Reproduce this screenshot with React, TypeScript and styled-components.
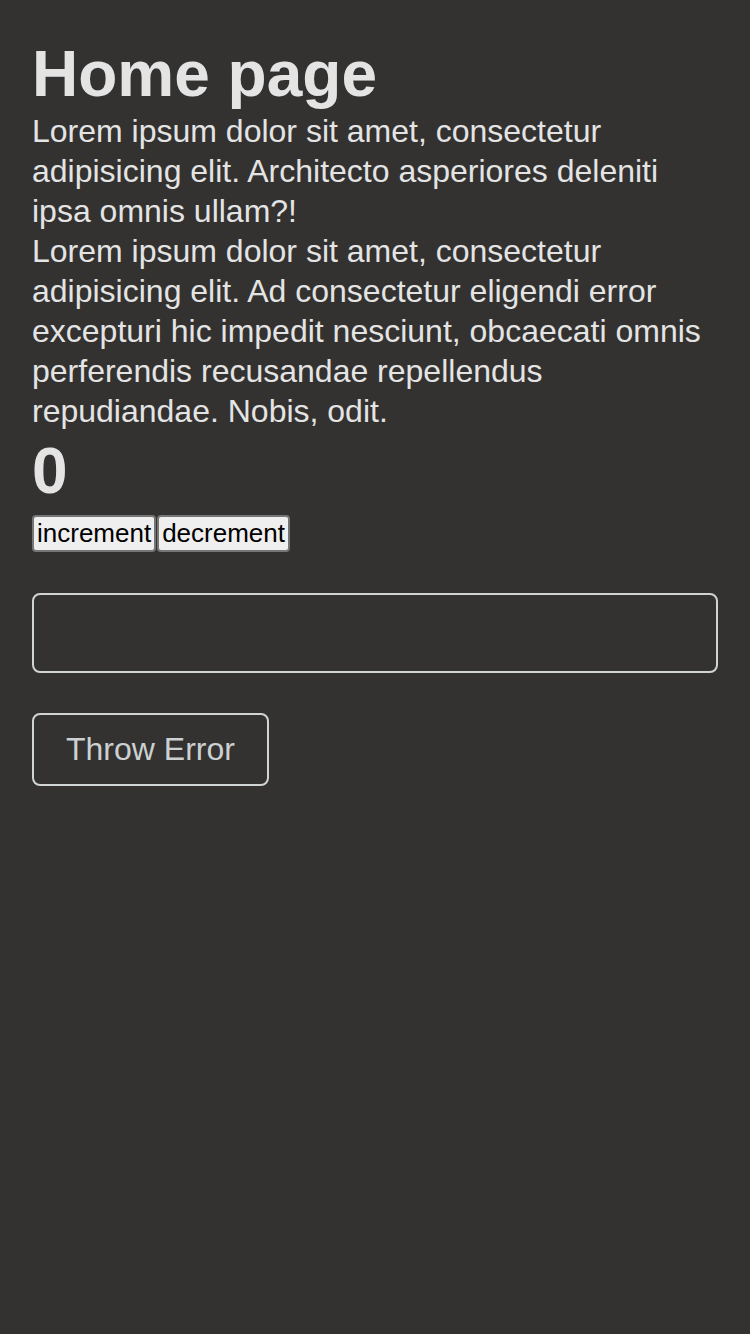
import React, { useState } from 'react';
import styled, { createGlobalStyle } from 'styled-components';

const GlobalStyle = createGlobalStyle`
  html, body {
    margin: 0;
    padding: 0;
    background: #333230;
  }
  body {
    font-family: "Liberation Sans", Arial, Helvetica, sans-serif;
    color: #e4e4e4;
    min-height: 100vh;
  }
`;

const Page = styled.main`
  padding: 37px 32px 40px;
  box-sizing: border-box;
  min-height: 100vh;
`;

const Title = styled.h1`
  font-size: 64px;
  font-weight: 700;
  line-height: 74px;
  margin: 0;
`;

const Text = styled.p`
  font-size: 32px;
  line-height: 40px;
  margin: 0;
`;

const Count = styled.h2`
  font-size: 64px;
  font-weight: 700;
  line-height: 80px;
  margin: 0 0 4px;
`;

const Controls = styled.div`
  display: flex;
  gap: 1px;
`;

const NativeButton = styled.button`
  box-sizing: border-box;
  height: 37px;
  font-family: "Liberation Sans", Arial, sans-serif;
  font-size: 26px;
  line-height: 31px;
  padding: 0 3px;
  color: #000;
  background: #efefef;
  border: 2px solid #767676;
  border-radius: 4px;
`;

const Field = styled.input`
  display: block;
  box-sizing: border-box;
  width: 100%;
  height: 80px;
  margin-top: 41px;
  background: transparent;
  border: 2px solid #d0d4d4;
  border-radius: 8px;
  color: #e4e4e4;
  font-size: 32px;
  padding: 0 16px;
  outline: none;
`;

const GhostButton = styled.button`
  display: block;
  margin-top: 40px;
  box-sizing: border-box;
  height: 73px;
  padding: 0 32px;
  background: transparent;
  border: 2px solid #d0d4d4;
  border-radius: 8px;
  color: #ccd0d0;
  font-family: "Liberation Sans", Arial, sans-serif;
  font-size: 32px;
`;

const App: React.FC = () => {
  const [count, setCount] = useState(0);
  const [value, setValue] = useState('');

  return (
    <>
      <GlobalStyle />
      <Page>
        <Title>Home page</Title>
        <Text>
          Lorem ipsum dolor sit amet, consectetur adipisicing elit. Architecto asperiores deleniti ipsa omnis ullam?!
        </Text>
        <Text>
          Lorem ipsum dolor sit amet, consectetur adipisicing elit. Ad consectetur eligendi error excepturi hic impedit
          nesciunt, obcaecati omnis perferendis recusandae repellendus repudiandae. Nobis, odit.
        </Text>
        <Count>{count}</Count>
        <Controls>
          <NativeButton onClick={() => setCount(count + 1)}>increment</NativeButton>
          <NativeButton onClick={() => setCount(count - 1)}>decrement</NativeButton>
        </Controls>
        <Field value={value} onChange={(e) => setValue(e.target.value)} />
        <GhostButton
          onClick={() => {
            throw new Error('Test error');
          }}
        >
          Throw Error
        </GhostButton>
      </Page>
    </>
  );
};

export default App;
